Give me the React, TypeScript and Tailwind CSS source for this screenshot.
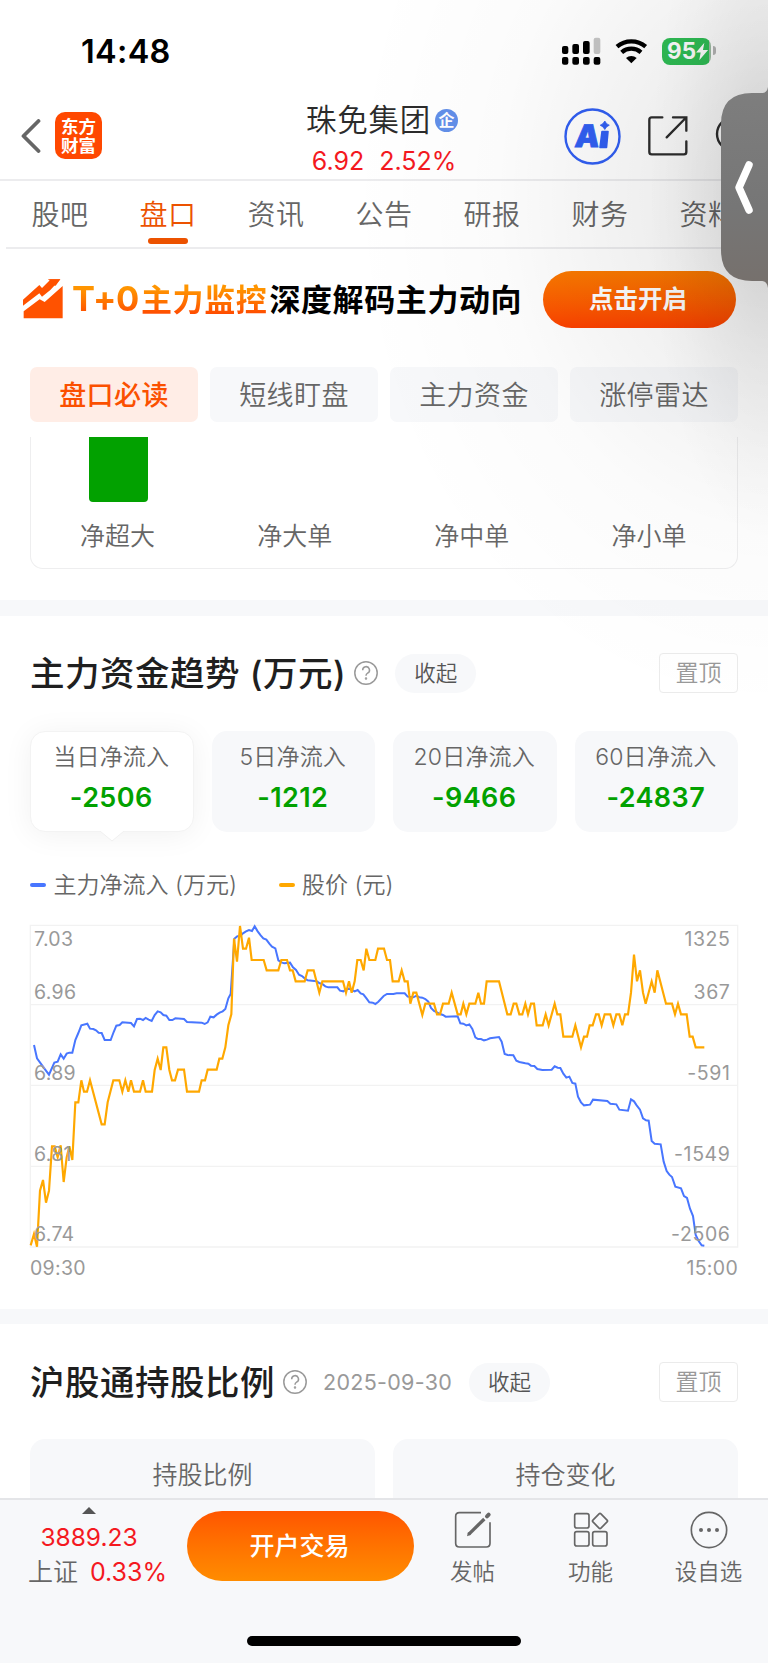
import type { ReactNode } from "react";

const navTabs = ["股吧", "盘口", "资讯", "公告", "研报", "财务", "资料"];
const panelTabs = ["盘口必读", "短线盯盘", "主力资金", "涨停雷达"];
const orderTypes = ["净超大", "净大单", "净中单", "净小单"];

const inflows = [
  { label: "当日净流入", value: "-2506" },
  { label: "5日净流入", value: "-1212" },
  { label: "20日净流入", value: "-9466" },
  { label: "60日净流入", value: "-24837" }
];

const axisRows = [
  { price: "7.03", flow: "1325", className: "top-[3px]" },
  { price: "6.96", flow: "367", className: "top-[56px]" },
  { price: "6.89", flow: "-591", className: "top-[137px]" },
  { price: "6.81", flow: "-1549", className: "top-[218px]" },
  { price: "6.74", flow: "-2506", className: "top-[298px]" }
];

// Both series share a 2124 x 966 plot area.
const flowPoints =
  "12,360 21,400 32,415 45,433 57,449 73,413 83,410 92,388 101,401 110,386 118,383 127,383 136,345 145,324 154,301 172,296 180,311 190,312 198,316 206,323 215,324 224,345 242,345 251,321 259,302 269,300 277,292 303,294 312,304 321,282 330,281 339,285 347,279 356,284 365,288 374,270 383,259 392,262 400,270 409,272 418,285 427,285 436,280 462,282 471,291 515,293 524,297 533,292 541,275 551,277 560,269 569,263 578,259 586,252 595,220 602,207 613,41 622,34 630,34 639,25 648,19 657,15 666,18 674,4 683,19 692,31 700,40 709,44 718,56 726,65 736,70 745,106 754,112 763,115 780,113 789,127 798,135 807,149 816,153 824,160 833,166 860,169 869,175 877,177 886,184 895,187 922,187 930,197 940,199 948,193 957,191 966,195 974,199 983,195 992,205 1000,208 1010,221 1018,232 1028,233 1036,237 1045,230 1061,213 1071,207 1090,207 1100,205 1124,205 1133,215 1150,217 1160,212 1168,217 1177,218 1186,222 1195,230 1203,249 1212,258 1221,262 1230,267 1239,270 1247,275 1283,274 1291,295 1300,296 1309,301 1318,298 1327,312 1336,337 1344,342 1353,342 1362,346 1371,344 1380,340 1407,336 1415,350 1424,387 1433,390 1450,391 1459,407 1468,411 1486,415 1495,416 1503,422 1513,423 1522,432 1537,435 1565,434 1574,424 1583,428 1591,429 1600,446 1609,458 1618,455 1627,474 1636,476 1644,515 1653,532 1662,541 1680,539 1689,524 1732,528 1741,536 1759,538 1768,554 1794,557 1803,523 1812,529 1820,541 1830,554 1839,580 1848,586 1856,587 1865,648 1874,656 1892,658 1901,710 1910,738 1918,749 1926,756 1936,785 1953,790 1962,813 1971,819 1980,851 1989,873 1997,930 2006,948 2015,961 2023,962";

const pricePoints =
  "2,961 12,927 21,965 30,797 39,765 48,833 57,797 66,664 74,664 83,697 92,661 101,771 110,697 118,664 127,705 136,532 145,532 154,466 162,500 171,500 180,466 215,598 224,598 233,532 250,466 268,466 277,500 286,466 295,500 303,466 312,500 330,500 339,466 347,500 366,500 374,435 383,401 392,435 400,367 409,367 418,435 426,466 435,466 444,434 462,434 471,500 507,500 515,466 525,466 533,434 560,434 568,401 577,401 586,367 595,301 604,268 612,41 621,110 630,3 639,71 648,71 657,38 665,105 701,105 710,136 745,136 754,105 771,105 780,136 788,136 797,169 824,169 833,136 851,136 868,203 877,169 939,169 948,203 957,169 965,203 974,169 982,105 992,105 1001,136 1009,71 1018,105 1036,105 1044,71 1062,71 1071,105 1080,105 1088,169 1106,169 1115,136 1124,169 1133,169 1141,236 1150,203 1159,203 1177,270 1186,236 1212,236 1221,268 1230,268 1239,236 1256,236 1265,203 1283,268 1292,268 1300,236 1309,268 1318,236 1336,236 1345,203 1353,236 1362,236 1370,169 1407,169 1432,268 1442,268 1451,236 1459,236 1468,268 1477,268 1486,236 1494,268 1503,236 1512,236 1520,301 1538,301 1547,268 1556,301 1574,236 1582,268 1591,268 1600,335 1627,335 1636,301 1653,367 1662,335 1671,335 1679,301 1688,301 1698,268 1706,268 1715,301 1724,268 1741,268 1750,301 1759,268 1768,268 1777,301 1785,268 1794,268 1803,203 1812,89 1821,169 1830,136 1839,203 1847,236 1865,169 1874,203 1882,136 1908,236 1926,236 1935,268 1944,236 1953,268 1970,268 1979,335 1988,335 1997,367 2023,367";

function StatusBar() {
  return (
    <div className="flex h-[92px] pt-[36px]">
      <span className="ml-[81px] w-[481px] text-[32.5px] leading-[31px] font-semibold tracking-[0.3px] text-black">
        14:48
      </span>
      <svg className="h-[30px] w-[40px]" viewBox="0 0 120 90">
        <g fill="#000">
          <rect x="0" y="30" width="19" height="24" rx="6" />
          <rect x="31" y="24" width="20" height="30" rx="6" />
          <rect x="63" y="15" width="20" height="39" rx="6" />
          <rect x="0" y="63" width="19" height="23" rx="6" />
          <rect x="31" y="63" width="20" height="23" rx="6" />
          <rect x="63" y="63" width="20" height="23" rx="6" />
          <rect x="95" y="63" width="20" height="23" rx="6" />
        </g>
        <rect x="95" y="5" width="20" height="49" rx="6" fill="#c6c6c6" />
      </svg>
      <svg className="ml-[12px] h-[30px] w-[34px]" viewBox="0 0 102 90">
        <path d="M9 32A66 66 0 0 1 95 32M23 49A44 44 0 0 1 81 49" fill="none" stroke="#000" strokeWidth="13" />
        <path d="M36 66A24 24 0 0 1 68 66L52 82Z" fill="#000" />
      </svg>
      <div className="relative ml-[14px] mt-[1.5px] flex h-[27px] w-[49px] items-center overflow-hidden rounded-[8px] bg-[linear-gradient(90deg,#2fbe55_95%,#9dbda3_95%)] pl-[5px]">
        <span className="text-[22.5px] leading-none font-bold tracking-[0.2px] text-white">95</span>
        <svg className="h-[19px] w-[13px]" viewBox="0 0 14 19">
          <path d="M9 0L0 10.5H5L3.5 19L13 8H7.5Z" fill="#fff" />
        </svg>
      </div>
      <span className="ml-[2px] mt-[10px] h-[9px] w-[3px] rounded-r-full bg-[#b5b5b5]" />
    </div>
  );
}

function StockHeader() {
  return (
    <header className="flex h-[89px] border-b-2 border-[#ececee]">
      <div className="flex w-[300px] shrink-0 pt-[20px] pl-[21px]">
        <svg className="mt-[7px] h-[34px] w-[20px]" viewBox="0 0 20 34">
          <path d="M17.5 2L2.5 17L17.5 32" fill="none" stroke="#666" strokeWidth="3.8" strokeLinecap="round" strokeLinejoin="round" />
        </svg>
        <div className="ml-[14px] flex size-[47px] flex-col items-center justify-center rounded-[10px] bg-[#ff4800] text-[17.5px] leading-[19px] font-bold text-white">
          <span>东方</span>
          <span>财富</span>
        </div>
      </div>
      <div className="flex w-[164px] shrink-0 flex-col items-center pt-[9px]">
        <div className="flex items-center gap-[4px]">
          <span className="text-[30.5px] leading-[38px] tracking-[0.7px] whitespace-nowrap text-[#2b2b2b]">珠免集团</span>
          <span className="flex size-[23px] items-center justify-center rounded-full bg-[#628fe9] text-[16px] leading-none font-bold text-white">
            企
          </span>
        </div>
        <div className="mt-[5px] flex gap-[15px] pl-[4px] text-[25px] leading-[34px] font-normal text-[#f4191f]">
          <span>6.92</span>
          <span>2.52%</span>
        </div>
      </div>
      <div className="flex shrink-0 pt-[15.5px] pl-[100px]">
        <svg className="size-[57px]" viewBox="0 0 57 57">
          <circle cx="28.5" cy="28.5" r="27" fill="#fff" stroke="#315ff3" strokeWidth="2.4" />
          <g fill="#315ff3">
            <text x="14" y="39" transform="skewX(-6)" className="text-[31px] font-black" stroke="#315ff3" strokeWidth="0.8">
              A
            </text>
            <path d="M38 23.5H44L42.5 39.5H36Z" stroke="#315ff3" strokeWidth="1.6" strokeLinejoin="round" />
            <path d="M40.8 13Q42 16 45.3 17.2Q42 18.5 40.8 21.5Q39.5 18.5 36.2 17.2Q39.5 16 40.8 13Z" stroke="#315ff3" strokeWidth="0.8" />
          </g>
        </svg>
        <svg className="mt-[7px] ml-[26px] size-[41px]" viewBox="0 0 123 123" fill="none" stroke="#2d2d2d" strokeWidth="7" strokeLinecap="round">
          <path d="M46 7H14Q7 7 7 14V111Q7 118 14 118H111Q118 118 118 111V79M78 7H118V47M116 9L59 67" />
        </svg>
        <svg className="mt-[8px] ml-[27px] h-[36px] w-[36px]" viewBox="0 0 36 36">
          <circle cx="18" cy="18" r="16" fill="none" stroke="#2d2d2d" strokeWidth="2.4" />
        </svg>
      </div>
    </header>
  );
}

function NavTabs() {
  return (
    <nav className="ml-[6px] flex h-[68px] border-b-2 border-[#ececee]">
      {navTabs.map((tab) => {
        const isActive = tab === "盘口";

        return (
          <span
            key={tab}
            className={[
              "relative flex w-[108px] shrink-0 justify-center pt-[14px] text-[28px] leading-[40px] tracking-[0.6px]",
              isActive ? "text-[#ec5200]" : "text-[#666]"
            ].join(" ")}
          >
            {tab}
            {isActive && <i className="absolute bottom-[3px] left-1/2 h-[6px] w-[40px] -translate-x-1/2 rounded-full bg-[#ec5200]" />}
          </span>
        );
      })}
    </nav>
  );
}

function PromoBanner() {
  return (
    <div className="flex h-[118px] items-start pt-[22px]">
      <svg className="mt-[8px] ml-[23px] size-[40px] shrink-0" viewBox="0 0 120 120" fill="#ff5200">
        <path d="M0 62L49 18L57 27L84 0H77L75 1H112L82 33L57 53L49 43L0 80Z" />
        <path d="M75 1H112L98 20L90 19L86 10Z" />
        <path d="M2 97L50 61L65 69L119 21V118H2Z" />
      </svg>
      <div className="ml-[9px] flex w-[471px] shrink-0 items-baseline pt-[6px] text-[31px] leading-[46px] font-bold tracking-[0.6px] whitespace-nowrap">
        <span className="flex items-baseline bg-linear-to-b from-[#ff9500] from-25% to-[#ff4b00] to-80% bg-clip-text text-transparent">
          <span className="w-[69px] text-[34.5px] leading-none font-bold tracking-[-0.3px]">T+0</span>主力监控
        </span>
        <span className="ml-[2px] text-black">深度解码主力动向</span>
      </div>
      <button
        type="button"
        className="flex h-[57px] w-[193px] shrink-0 items-center justify-center rounded-full bg-linear-to-b from-[#fb7a00] to-[#fd4000] pr-[3px] text-[24.5px] font-bold text-white"
      >
        点击开启
      </button>
    </div>
  );
}

function OrderPanel() {
  return (
    <>
      <div className="grid h-[55px] grid-cols-4 gap-[12px] px-[30px]">
        {panelTabs.map((tab, index) => (
          <span
            key={tab}
            className={[
              "flex items-center justify-center rounded-[7px] pt-[3px] text-[27px] tracking-[0.4px]",
              index === 0 ? "bg-[#ffede6] font-medium text-[#fb5000]" : "bg-[#f7f8fa] text-[#666]"
            ].join(" ")}
          >
            {tab}
          </span>
        ))}
      </div>
      <div className="mx-[30px] mt-[15px] h-[132px] rounded-b-[13px] border-[1.5px] border-t-0 border-[#eeeeef]">
        <div className="-mr-px -ml-[1.5px] grid grid-cols-4">
          {orderTypes.map((type, index) => (
            <div key={type} className="flex flex-col items-center">
              <div className={index === 0 ? "h-[65px] w-[59px] rounded-b-[4px] bg-[#02a100]" : "h-[65px]"} />
              <span className="mt-[16px] pr-px text-[25px] leading-[36px] text-[#666]">{type}</span>
            </div>
          ))}
        </div>
      </div>
    </>
  );
}

function SectionTitle({ title, date }: { title: ReactNode; date?: string }) {
  return (
    <div className="flex h-[40px] items-center px-[30px]">
      <h2 className="pt-px text-[34.5px] leading-[40px] font-medium tracking-[0.5px] whitespace-nowrap text-[#1f1f1f]">{title}</h2>
      <svg className="ml-[8px] size-[24px] shrink-0" viewBox="0 0 24 24" fill="none" stroke="#999" strokeWidth="1.5">
        <circle cx="12" cy="12" r="11.2" />
        <path d="M8.7 9.3A3.4 3.4 0 1 1 13.6 12.1Q12 13 12 14.8" />
        <circle cx="12" cy="17.6" r="0.5" />
      </svg>
      {date && (
        <span className="ml-[16px] w-[129px] text-[21.5px] font-normal tracking-[0.3px] whitespace-nowrap text-[#999]">{date}</span>
      )}
      <span className="ml-[17px] flex h-[39px] w-[81px] items-center justify-center rounded-full bg-[#f7f8fa] pt-px text-[21.5px] text-[#555]">
        收起
      </span>
      <span className="ml-auto flex h-[40px] w-[79px] items-center justify-center rounded-[4px] border-[1.5px] border-[#ebebeb] pt-px text-[23px] text-[#999]">
        置顶
      </span>
    </div>
  );
}

function InflowCards() {
  return (
    <div className="mt-[38px] grid h-[101px] grid-cols-4 gap-[18px] px-[30px]">
      {inflows.map((item, index) => (
        <div
          key={item.label}
          className={[
            "relative flex flex-col items-center rounded-[15px] pr-px",
            index === 0 ? "border border-[#f3f3f3] bg-white pt-[8px] shadow-[0_3px_30px_rgba(0,0,0,0.06)]" : "bg-[#f7f8fa] pt-[9px]"
          ].join(" ")}
        >
          <span className="text-[23px] leading-[34px] tracking-[0.2px] whitespace-nowrap text-[#666]">{item.label}</span>
          <span className="mt-[7px] text-[27px] leading-[34px] font-semibold tracking-[0.4px] text-[#02a100]">{item.value}</span>
          {index === 0 && (
            <svg className="absolute top-[98px] left-1/2 h-[12px] w-[24px] -translate-x-1/2" viewBox="0 0 24 12">
              <path d="M0 1L12 11L24 1" fill="#fff" stroke="#f0f0f0" />
              <path d="M0 0H24V1H0Z" fill="#fff" />
            </svg>
          )}
        </div>
      ))}
    </div>
  );
}

function TrendChart() {
  return (
    <div className="mt-[33px] px-[30px]">
      <div className="flex h-[40px] items-center text-[23px] whitespace-nowrap text-[#666]">
        <i className="mr-[7.5px] h-[4px] w-[16px] rounded-full bg-[#4876ff]" />
        <span className="w-[225px]">主力净流入 (万元)</span>
        <i className="mr-[7.5px] h-[4px] w-[16px] rounded-full bg-[#ffa800]" />
        <span>股价 (元)</span>
      </div>
      <div className="relative mt-[20px] h-[323px]">
        <svg className="block h-[322px] w-[708px] overflow-visible" viewBox="0 0 2124 966" fill="none">
          <path d="M1 1H2123V966H1ZM0 239H2124M0 481H2124M0 724H2124" stroke="#f2f2f2" strokeWidth="4" />
          <polyline points={flowPoints} stroke="#4876ff" strokeWidth="6" />
          <polyline points={pricePoints} stroke="#ffa800" strokeWidth="6.5" />
        </svg>
        {axisRows.map((row) => (
          <div
            key={row.price}
            className={`absolute inset-x-0 flex justify-between pr-[7.5px] pl-[4px] text-[19.5px] leading-[22px] font-normal tracking-[0.3px] text-[#999] ${row.className}`}
          >
            <span>{row.price}</span>
            <span className="tracking-[0.6px]">{row.flow}</span>
          </div>
        ))}
      </div>
      <div className="mt-[9px] flex justify-between text-[19.5px] leading-[22px] font-normal tracking-[0.3px] text-[#999]">
        <span>09:30</span>
        <span>15:00</span>
      </div>
    </div>
  );
}

function BottomItem({ label, children }: { label: string; children: ReactNode }) {
  return (
    <div className="flex w-[118px] flex-col items-center pt-[11px]">
      <svg className="size-[38px]" viewBox="0 0 114 114" fill="none" stroke="#666" strokeWidth="5">
        {children}
      </svg>
      <span className="mt-[6px] text-[22.5px] leading-[34px] text-[#666]">{label}</span>
    </div>
  );
}

function BottomBar() {
  return (
    <footer className="absolute inset-x-0 bottom-0 h-[165px] border-t-2 border-[#e4e5e8] bg-[#f7f8fa]">
      <div className="flex h-[100px]">
        <div className="flex w-[187px] shrink-0 flex-col items-center pt-[7px] pr-[9px]">
          <svg className="h-[7px] w-[14px]" viewBox="0 0 14 7">
            <path d="M0 7L7 0L14 7Z" fill="#555" />
          </svg>
          <span className="mt-[7px] text-[24.5px] leading-[32px] font-normal text-[#f4191f]">3889.23</span>
          <div className="mt-[2px] flex items-center gap-[12px] pl-[17px] text-[25px] leading-[34px] whitespace-nowrap">
            <span className="text-[#666]">上证</span>
            <span className="font-normal text-[#f4191f]">0.33%</span>
          </div>
        </div>
        <button
          type="button"
          className="mt-[11px] h-[70px] w-[227px] shrink-0 rounded-full bg-linear-to-b from-[#ff5500] to-[#ff8c00] pt-px pr-[2px] text-[25px] font-medium text-white"
        >
          开户交易
        </button>
        <div className="-ml-[0.5px] flex">
          <BottomItem label="发帖">
            <path d="M81 5H16Q5 5 5 16V97Q5 108 16 108H97Q108 108 108 97V34" />
            <path d="M44 70L91 24" strokeWidth="10" />
            <path d="M39 76L42 63L51 71Z" fill="#666" stroke="none" />
            <path d="M99 16L104 11" strokeWidth="12" strokeLinecap="round" />
          </BottomItem>
          <BottomItem label="功能">
            <rect x="8" y="8" width="43" height="43" rx="6" />
            <rect x="8" y="62" width="43" height="43" rx="6" />
            <rect x="62" y="62" width="43" height="43" rx="6" />
            <rect x="67" y="13" width="34" height="34" rx="4" transform="rotate(45 84 30)" />
          </BottomItem>
          <BottomItem label="设自选">
            <circle cx="57" cy="57" r="53" />
            <g fill="#666" stroke="none">
              <circle cx="33" cy="57" r="6" />
              <circle cx="57" cy="57" r="6" />
              <circle cx="81" cy="57" r="6" />
            </g>
          </BottomItem>
        </div>
      </div>
      <div className="mx-auto mt-[36px] h-[10px] w-[274px] rounded-full bg-black" />
    </footer>
  );
}

// Pull-out handle docked on the right edge, with the soft shade it casts.
function SideHandle() {
  return (
    <div className="pointer-events-none absolute inset-0 overflow-hidden">
      <div className="absolute inset-0 bg-[radial-gradient(ellipse_120px_350px_at_768px_195px,rgba(0,0,0,0.13),rgba(0,0,0,0.055)_45%,rgba(0,0,0,0.015)_78%,transparent),radial-gradient(ellipse_420px_520px_at_768px_195px,rgba(0,0,0,0.1),rgba(0,0,0,0.055)_35%,rgba(0,0,0,0.017)_65%,transparent)]" />
      <svg className="absolute top-[87px] right-0 h-[201px] w-[47px]" viewBox="0 0 47 201">
        <defs>
          <linearGradient id="handle" x1="0" y1="0" x2="0" y2="1">
            <stop offset="0" stopColor="#7e7e7e" />
            <stop offset="0.6" stopColor="#767676" />
            <stop offset="1" stopColor="#76706c" />
          </linearGradient>
        </defs>
        <path d="M47 0Q46 6 41 6H31Q0 6 0 37V163Q0 194 31 194H41Q46 194 47 201Z" fill="url(#handle)" />
        <path d="M28 78L18 100.5L28 123" fill="none" stroke="#fff" strokeWidth="7.5" strokeLinecap="round" strokeLinejoin="round" />
      </svg>
    </div>
  );
}

export default function App() {
  return (
    <div className="relative h-[1663px] w-[768px] overflow-hidden bg-white font-[Inter,'Noto_Sans_CJK_SC',sans-serif] font-[350]">
      <StatusBar />
      <StockHeader />
      <NavTabs />
      <PromoBanner />
      <OrderPanel />
      <section className="mt-[31px] border-t-[16px] border-[#f7f8fa] pt-[37px]">
        <SectionTitle title="主力资金趋势 (万元)" />
        <InflowCards />
        <TrendChart />
      </section>
      <section className="mt-[30px] border-t-[15px] border-[#f7f8fa] pt-[38px]">
        <SectionTitle title="沪股通持股比例" date="2025-09-30" />
        <div className="mt-[37px] grid grid-cols-2 gap-[18px] px-[30px]">
          {["持股比例", "持仓变化"].map((label) => (
            <div key={label} className="h-[100px] rounded-[15px] bg-[#f7f8fa] pt-[18px] text-center text-[25px] leading-[36px] text-[#666]">
              {label}
            </div>
          ))}
        </div>
      </section>
      <BottomBar />
      <SideHandle />
    </div>
  );
}
